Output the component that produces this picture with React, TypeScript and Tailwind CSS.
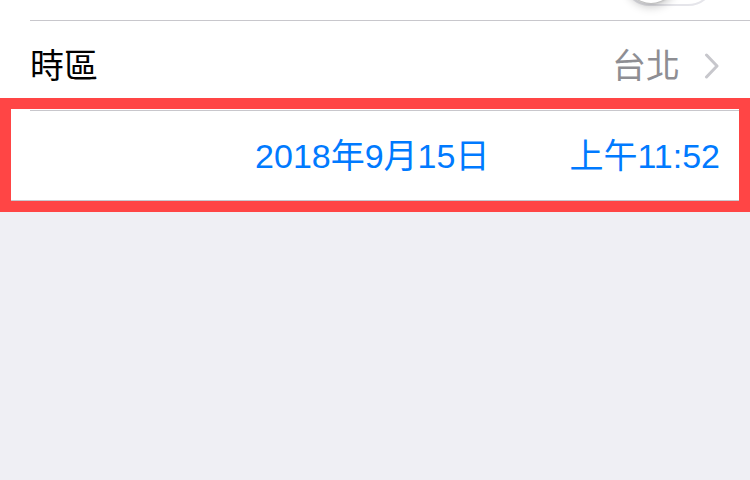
import React from "react";

const font = { fontFamily: '"Liberation Sans", "Noto Sans CJK TC", sans-serif' };

function Chevron() {
  return (
    <svg width="16" height="26" viewBox="0 0 16 26" fill="none">
      <path d="M2.5 2 L13 13 L2.5 24" stroke="#c7c7cc" strokeWidth="3" strokeLinecap="round" strokeLinejoin="round" />
    </svg>
  );
}

export default function App() {
  return (
    <div className="relative w-[750px] h-[480px] bg-[#efeff4] overflow-hidden" style={font}>
      <div className="bg-white">
        {/* tail of the previous row with its switch */}
        <div className="h-[20px] relative overflow-hidden">
          <div className="absolute left-[622px] top-[-50px] w-[94px] h-[56px] rounded-full bg-white border-2 border-[#e5e5ea]">
            <div className="absolute left-[2px] top-[1px] w-[50px] h-[50px] rounded-full bg-white shadow-[0_4px_10px_rgba(0,0,0,0.22),0_1px_2px_rgba(0,0,0,0.15)]" />
          </div>
        </div>
        <div className="ml-[30px] h-px bg-[#c8c7cc]" />

        {/* time zone */}
        <div className="h-[89px] flex items-center pl-[30px] pr-[30px]">
          <span className="text-[34px] text-black leading-none">時區</span>
          <span className="ml-auto text-[34px] text-[#8e8e93] leading-none">台北</span>
          <span className="ml-[24px] flex items-center">
            <Chevron />
          </span>
        </div>
        <div className="ml-[30px] h-px bg-[#c8c7cc]" />

        {/* date + time */}
        <div className="h-[89px] flex items-center justify-end gap-[80px] pr-[30px]">
          <span className="text-[34px] text-[#007aff] leading-none">2018年9月15日</span>
          <span className="text-[34px] text-[#007aff] leading-none">上午11:52</span>
        </div>
        <div className="h-px bg-[#c8c7cc]" />
      </div>

      {/* highlight annotation */}
      <div className="absolute left-0 top-[98px] w-[750px] h-[114px] border-[11px] border-[#ff4545]" />
    </div>
  );
}
